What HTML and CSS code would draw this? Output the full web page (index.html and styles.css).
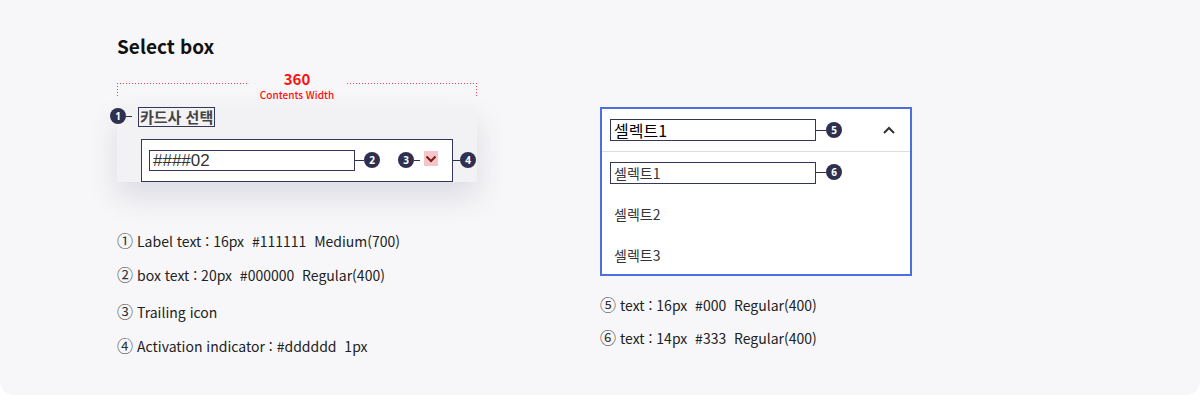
FILE: index.html
```html
<!DOCTYPE html>
<html lang="ko">
<head>
  <meta charset="UTF-8" />
  <meta name="viewport" content="width=device-width, initial-scale=1.0"/>
  <title>Select box</title>
  <link rel="stylesheet" href="styles.css">
</head>
<body>
  <div class="page">
    <div class="col-left">
      <h2 class="title">Select box</h2>

      <div class="measure">
        <span class="measure-side side-left"></span>
        <div class="measure-label">
          <span class="measure-num">360</span>
          <span class="measure-txt">Contents Width</span>
        </div>
        <span class="measure-side side-right"></span>
      </div>

      <div class="card">
        <div class="label-row">
          <span class="badge badge-label">1</span>
          <span class="label-text">카드사 선택</span>
        </div>
        <div class="select">
          <span class="select-value">####02</span>
          <span class="badge badge-2">2</span>
          <span class="badge badge-3">3</span>
          <span class="trail-icon">
            <svg width="14" height="15" viewBox="0 0 14 15"><path d="M2.5 5.5 L7 10 L11.5 5.5" fill="none" stroke="#7a1a1e" stroke-width="2"/></svg>
          </span>
          <span class="badge badge-4">4</span>
        </div>
      </div>

      <ul class="desc desc-left">
        <li><span class="num">①</span>Label text : 16px&nbsp; #111111&nbsp; Medium(700)</li>
        <li><span class="num">②</span>box text : 20px&nbsp; #000000&nbsp; Regular(400)</li>
        <li class="gap"><span class="num">③</span>Trailing icon</li>
        <li><span class="num">④</span>Activation indicator : #dddddd&nbsp; 1px</li>
      </ul>
    </div>

    <div class="col-right">
      <div class="dropdown">
        <div class="dd-head">
          <span class="dd-value">셀렉트1</span>
          <span class="badge badge-5">5</span>
          <svg class="dd-arrow" width="14" height="10" viewBox="0 0 14 10"><path d="M2 8 L7 3 L12 8" fill="none" stroke="#333" stroke-width="2"/></svg>
        </div>
        <ul class="dd-list">
          <li class="dd-item dd-first"><span class="dd-opt">셀렉트1</span><span class="badge badge-6">6</span></li>
          <li class="dd-item">셀렉트2</li>
          <li class="dd-item">셀렉트3</li>
        </ul>
      </div>

      <ul class="desc desc-right">
        <li><span class="num">⑤</span>text : 16px&nbsp; #000&nbsp; Regular(400)</li>
        <li><span class="num">⑥</span>text : 14px&nbsp; #333&nbsp; Regular(400)</li>
      </ul>
    </div>
  </div>
</body>
</html>
```

FILE: styles.css
```css
body {
  margin: 0;
  padding: 0;
  background: #ffffff;
  font-family: "Noto Sans CJK KR", "Noto Sans", sans-serif;
}
.page {
  width: 1200px;
  height: 395px;
  box-sizing: border-box;
  background: #f7f7f9;
  border-radius: 0 0 14px 14px;
  padding: 0 0 0 117px;
  display: flex;
  gap: 123px;
}
.col-left {
  width: 360px;
}
.col-right {
  width: 312px;
  padding-top: 107px;
}
.title {
  margin: 33px 0 0;
  font-size: 19px;
  line-height: 26px;
  font-weight: 700;
  color: #111;
}
.measure {
  margin-top: 11px;
  height: 37px;
  display: flex;
}
.measure-side {
  flex: 1;
  margin-top: 13px;
  height: 14px;
  background-repeat: no-repeat;
}
.side-left {
  background-image:
    repeating-linear-gradient(to right, #f2404e 0 1px, transparent 1px 3px),
    repeating-linear-gradient(to bottom, #f2404e 0 1px, transparent 1px 3px);
  background-size: 100% 1px, 1px 100%;
  background-position: left top, left top;
}
.side-right {
  background-image:
    repeating-linear-gradient(to left, #f2404e 0 1px, transparent 1px 3px),
    repeating-linear-gradient(to bottom, #f2404e 0 1px, transparent 1px 3px);
  background-size: 100% 1px, 1px 100%;
  background-position: right top, right top;
}
.measure-label {
  width: 100px;
  display: flex;
  flex-direction: column;
  align-items: center;
}
.measure-num {
  font-size: 15px;
  line-height: 17px;
  font-weight: 700;
  color: #ff1010;
}
.measure-txt {
  font-size: 10px;
  line-height: 12px;
  color: #ff1010;
  font-weight: 500;
  margin-top: 2px;
}
.card {
  height: 75px;
  background: #f2f2f4;
  box-shadow: 0 14px 30px rgba(60, 60, 100, 0.15);
  position: relative;
  display: flex;
  flex-direction: column;
}
.label-row {
  padding-left: 21px;
  display: flex;
}
.label-text {
  border: 1px solid #34365a;
  font-size: 15px;
  line-height: 18px;
  font-weight: 700;
  color: #444;
  padding: 0 1px;
}
.badge {
  position: absolute;
  width: 16px;
  height: 16px;
  border-radius: 50%;
  background: #2e3050;
  color: #fff;
  font-family: "Noto Sans", sans-serif;
  font-size: 10px;
  font-weight: 700;
  line-height: 16px;
  text-align: center;
}
.badge::before {
  content: "";
  position: absolute;
  top: 8px;
  right: 16px;
  width: 10px;
  border-top: 1px solid #2e3050;
}
.badge-label {
  left: -7px;
  top: 1px;
}
.badge-label::before {
  left: 16px;
  right: auto;
  width: 6px;
}
.select {
  margin: 12px 0 0 24px;
  width: 312px;
  flex: 1;
  box-sizing: border-box;
  background: #fff;
  border: 1px solid #34365a;
  display: flex;
  align-items: center;
  padding-left: 7px;
  position: relative;
}
.select-value {
  width: 206px;
  height: 21px;
  box-sizing: border-box;
  border: 1px solid #34365a;
  font-family: "Liberation Sans", Arial, sans-serif;
  font-size: 17px;
  line-height: 19px;
  color: #333;
  padding-left: 3px;
}
.badge-2 { left: 222px; top: 12px; }
.badge-2::before { width: 9px; }
.badge-3 { left: 256px; top: 12px; }
.badge-3::before { left: 16px; right: auto; width: 6px; }
.trail-icon {
  position: absolute;
  left: 282px;
  top: 11px;
  width: 14px;
  height: 15px;
  background: #f6c5c7;
  display: flex;
}
.badge-4 { left: 318px; top: 12px; }
.badge-4::before { width: 7px; }
.desc {
  list-style: none;
  margin: 0;
  padding: 0;
  font-size: 14px;
  line-height: 20px;
  color: #222;
}
.desc .num {
  font-size: 16px;
  margin-right: 4px;
  color: #333;
}
.desc-left {
  margin-top: 48px;
}
.desc-left li {
  margin-bottom: 13px;
}
.desc-left li.gap {
  margin-top: 16px;
}
.dropdown {
  border: 2px solid #4b6fe0;
  background: #fff;
  height: 169px;
  box-sizing: border-box;
}
.dd-head {
  height: 42px;
  border-bottom: 1px solid #dddddd;
  display: flex;
  align-items: center;
  padding-left: 8px;
  position: relative;
}
.dd-value {
  width: 206px;
  height: 22px;
  box-sizing: border-box;
  border: 1px solid #34365a;
  font-size: 16px;
  line-height: 20px;
  color: #000;
  padding-left: 3px;
}
.badge-5 { left: 224px; top: 13px; }
.badge-5::before { width: 10px; }
.dd-arrow {
  margin-left: auto;
  margin-right: 14px;
}
.dd-list {
  list-style: none;
  margin: 0;
  padding: 0;
}
.dd-item {
  height: 41px;
  display: flex;
  align-items: center;
  padding-left: 12px;
  font-size: 14px;
  color: #333;
  position: relative;
}
.dd-first {
  padding-left: 8px;
}
.dd-opt {
  width: 206px;
  height: 22px;
  box-sizing: border-box;
  border: 1px solid #34365a;
  line-height: 20px;
  padding-left: 3px;
}
.badge-6 { left: 224px; top: 12px; }
.desc-right {
  margin-top: 18px;
}
.desc-right li {
  margin-bottom: 12px;
}
```
